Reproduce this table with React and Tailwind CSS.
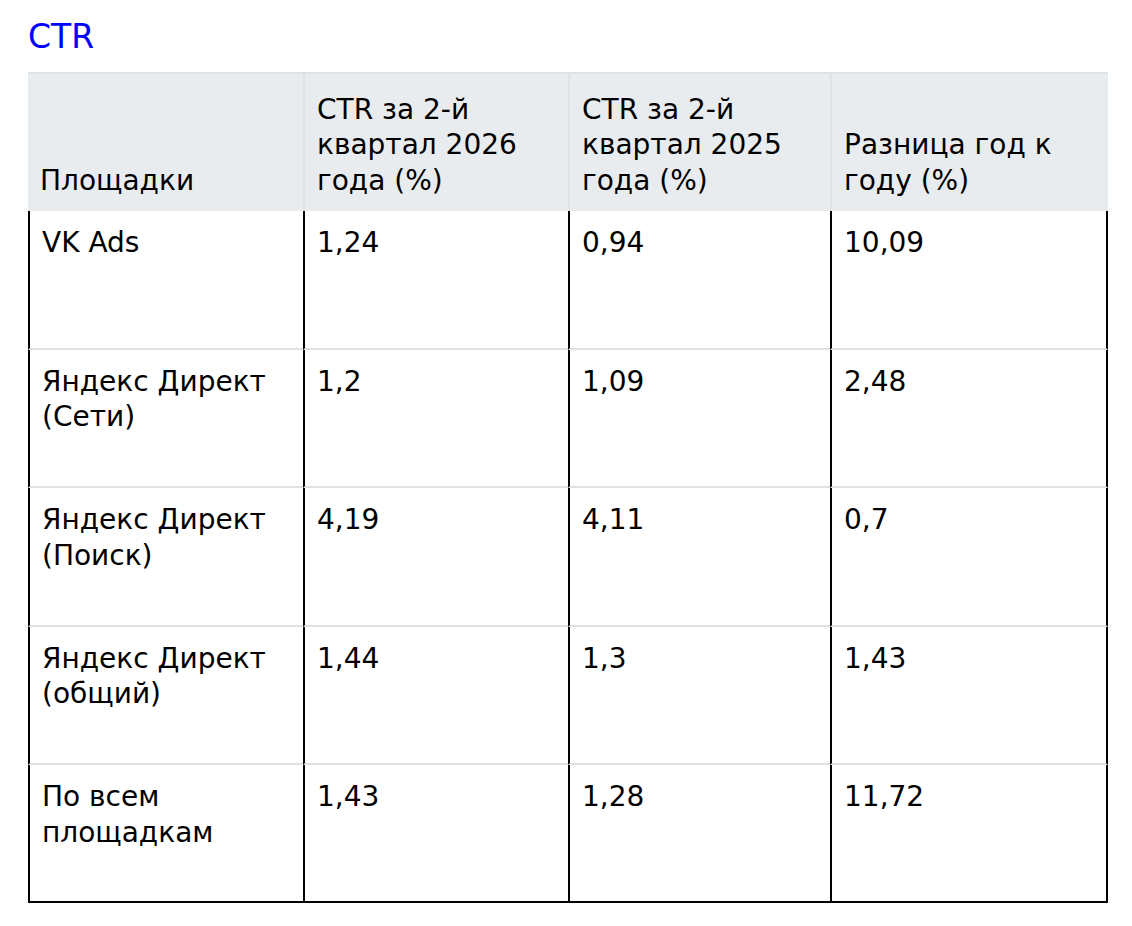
const HEADERS = [
  'Площадки',
  'CTR за 2-й квартал 2026 года (%)',
  'CTR за 2-й квартал 2025 года (%)',
  'Разница год к году (%)',
]

const WIDTHS = ['w-[275px]', 'w-[265px]', 'w-[262px]', 'w-[278px]']

const ROWS = [
  ['VK Ads', '1,24', '0,94', '10,09'],
  ['Яндекс Директ (Сети)', '1,2', '1,09', '2,48'],
  ['Яндекс Директ (Поиск)', '4,19', '4,11', '0,7'],
  ['Яндекс Директ (общий)', '1,44', '1,3', '1,43'],
  ['По всем площадкам', '1,43', '1,28', '11,72'],
]

export default function App() {
  return (
    <div className="min-h-screen bg-white pl-[28px] pt-[17px] text-black font-['DejaVu_Sans',sans-serif]">
      <h2 className="mb-[15px] text-[33px] leading-[40px] font-normal text-[#0000ff]">CTR</h2>

      <table className="w-[1080px] table-fixed border-separate border-spacing-0 text-[28px] leading-[35.5px]">
        <thead>
          <tr>
            {HEADERS.map((h, i) => (
              <th
                key={h}
                className={`${WIDTHS[i]} h-[139px] bg-[#e9ecef] border-t-2 border-[#dee2e6] px-3 pb-[13px] pt-3 text-left align-bottom font-normal
                  ${i > 0 ? 'border-l-2' : ''}
                `}
              >
                {h}
              </th>
            ))}
          </tr>
        </thead>
        <tbody>
          {ROWS.map((row, r) => {
            const last = r === ROWS.length - 1
            return (
              <tr key={row[0]}>
                {row.map((cell, c) => (
                  <td
                    key={c}
                    className={`border-l-2 border-l-black px-3 pt-[14px] align-top
                      ${c === row.length - 1 ? 'border-r-2 border-r-black' : ''}
                      ${last ? 'h-[137.5px] border-b-2 border-b-black' : 'h-[138.5px] border-b-2 border-b-[#dee2e6]'}
                    `}
                  >
                    {cell}
                  </td>
                ))}
              </tr>
            )
          })}
        </tbody>
      </table>
    </div>
  )
}
